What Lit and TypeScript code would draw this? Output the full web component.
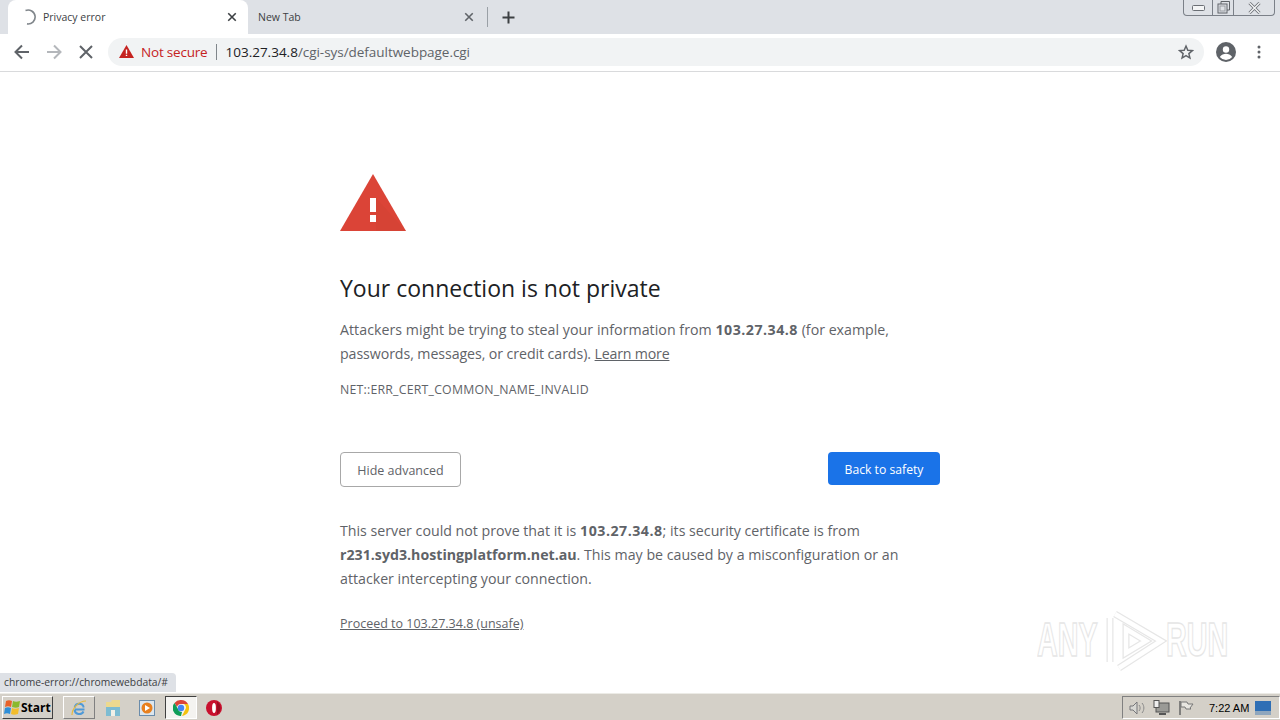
import { LitElement, css, html, svg } from 'lit';
import { customElement } from 'lit/decorators.js';

const cross = (size: number, color: string, sw: number) => html`<svg width=${size} height=${size} viewBox="0 0 12 12"><path d="M1.5 1.5 10.5 10.5M10.5 1.5 1.5 10.5" stroke=${color} stroke-width=${sw} fill="none"/></svg>`;

// watermark bands: a thick grey stroke with a white one on top gives the double line
const bands = ['M10 6 56 33 14 60', 'M5 10V54', 'M21 21 41 33 21 45Z'];

@customElement('app-root')
export class AppRoot extends LitElement {
  static styles = css`
    :host {
      display: flex;
      flex-direction: column;
      width: 1280px;
      height: 720px;
      overflow: hidden;
      position: relative;
      background: #fff;
      font-family: "Open Sans", "Noto Sans", sans-serif;
      color: #333;
    }
    svg { display: block; flex: none; }

    /* tab strip */
    .tabstrip {
      height: 34px;
      flex: none;
      background: #dee1e6;
      display: flex;
      padding-left: 8px;
    }
    .tab {
      display: flex;
      align-items: center;
      font-size: 10.5px;
      color: #3c4043;
      box-sizing: border-box;
    }
    .tab.active {
      width: 240px;
      background: #fff;
      border-radius: 8px 8px 0 0;
      padding: 0 11px 0 14px;
    }
    .tab.active .title { margin-left: 5px; }
    .tab.other { width: 237px; padding: 0 11px 0 10px; }
    .tab .title { flex: 1; }
    .sep { width: 1px; height: 20px; background: #9aa0a6; align-self: center; margin-left: 2px; }
    .plus { margin-left: 14px; align-self: center; }
    .winctl {
      margin-left: auto;
      margin-right: 5px;
      width: 92px;
      height: 16px;
      box-sizing: border-box;
      border: 1px solid #7b8088;
      border-top: none;
      border-radius: 0 0 4px 4px;
      display: grid;
      grid-template-columns: 28px 21px 1fr;
    }
    .winctl div { display: flex; align-items: center; justify-content: center; }
    .winctl div + div { border-left: 1px solid #7b8088; }

    /* toolbar */
    .toolbar {
      height: 38px;
      flex: none;
      box-sizing: border-box;
      border-bottom: 1px solid #d9dadc;
      display: flex;
      align-items: center;
      padding: 0 0 2px 13px;
    }
    .navbtn { width: 32px; display: flex; }
    .omnibox {
      width: 1096px;
      height: 28px;
      margin-left: -1px;
      border-radius: 14px;
      background: #f1f3f4;
      display: flex;
      align-items: center;
      box-sizing: border-box;
      padding: 0 10px 0 11px;
      font-size: 13.5px;
    }
    .notsecure { color: #c5221f; margin-left: 7px; letter-spacing: -0.2px; }
    .divider { width: 1px; height: 16px; background: #80868b; margin: 0 8px 0 9px; }
    .host { color: #202124; }
    .path { color: #5f6368; flex: 1; letter-spacing: -0.04px; }
    .avatar { margin-left: 12px; }
    .dots { margin-left: 21px; }

    /* interstitial */
    .page {
      flex: 1;
      padding: 102px 0 0 340px;
      width: 600px;
    }
    h1 {
      margin: 39px 0 0;
      font-size: 23px;
      font-weight: 400;
      line-height: 36px;
      color: #202124;
    }
    p {
      margin: 0;
      font-size: 14.2px;
      line-height: 24px;
      color: #5f6368;
    }
    .summary { margin-top: 12px; }
    b { font-weight: 700; }
    .ip { letter-spacing: 0.5px; }
    .lead { letter-spacing: 0.04px; }
    .tight { letter-spacing: -0.08px; }
    .u { text-decoration: underline; color: #5f6368; }
    .learn { letter-spacing: -0.2px; }
    .code {
      margin-top: 16px;
      font-size: 12.3px;
      letter-spacing: 0.22px;
      line-height: 16px;
      color: #5f6368;
    }
    .buttons {
      margin-top: 54px;
      display: flex;
      justify-content: space-between;
      align-items: flex-start;
    }
    .btn {
      box-sizing: border-box;
      border-radius: 4px;
      padding-top: 1px;
      display: flex;
      align-items: center;
      justify-content: center;
    }
    .btn.secondary { width: 121px; height: 35px; border: 1px solid #a8a8a8; color: #5f6368; font-size: 12.5px; }
    .btn.primary { width: 112px; height: 33px; background: #1a73e8; color: #fff; font-size: 12.2px; }
    .details { margin-top: 32px; }
    .proceed { margin-top: 23px; font-size: 12.5px; line-height: 20px; }

    /* status bubble over the page */
    .status {
      position: absolute;
      left: 0;
      bottom: 28px;
      height: 19px;
      padding: 0 8px 0 4px;
      background: #dee1e6;
      border-radius: 0 4px 0 0;
      font-size: 10.3px;
      line-height: 19px;
      color: #3c4043;
    }
    .watermark {
      position: absolute;
      left: 1037px;
      top: 608px;
      display: flex;
      align-items: center;
      font-family: "Liberation Sans", sans-serif;
      font-weight: 700;
      font-size: 48px;
      line-height: 64px;
      color: #fff;
      -webkit-text-stroke: 1.5px #e6e6e6;
    }
    .watermark span { display: block; transform: scaleX(0.6); transform-origin: left center; white-space: nowrap; }
    .watermark .any { width: 68px; }
    .watermark .run { width: 68px; margin-left: -1px; }

    /* taskbar */
    .taskbar {
      height: 28px;
      flex: none;
      box-sizing: border-box;
      background: #d4d0c8;
      border-top: 1px solid #fff;
      box-shadow: inset 0 1px 0 #ecebe6;
      display: flex;
      align-items: center;
      padding: 2px 0 0 2px;
    }
    .start {
      width: 51px;
      height: 23px;
      box-sizing: border-box;
      border: 1px solid;
      border-color: #fff #404040 #404040 #fff;
      display: flex;
      align-items: center;
      padding-left: 1px;
      font-weight: 700;
      font-size: 12px;
      color: #000;
    }
    .quick {
      display: flex;
      align-items: center;
      justify-content: center;
      box-sizing: border-box;
      height: 23px;
      width: 32px;
      margin-left: 2px;
    }
    .quick.raised { border: 1px solid; border-color: #fff #808080 #808080 #fff; margin-left: 10px; }
    .quick.pressed { border: 1px solid; border-color: #404040 #fff #fff #404040; background: #f4f3f0; }
    .quick.last { margin-left: 1px; }
    .tray {
      margin-left: auto;
      width: 158px;
      height: 23px;
      box-sizing: border-box;
      border: 1px solid;
      border-color: #808080 #fff #fff #808080;
      display: flex;
      align-items: center;
      padding-left: 5px;
      font-family: "Liberation Sans", sans-serif;
      font-size: 11px;
      color: #000;
    }
    .tray .net { margin-left: 7px; }
    .tray .flag { margin-left: 8px; }
    .clock { margin-left: 15px; width: 46px; }
  `;

  private arrow(color: string, flip = false) {
    return html`<svg width="18" height="18" viewBox="0 0 18 18" style=${flip ? 'transform:scaleX(-1)' : ''}><path d="M16 9H3M9 2.5 2.5 9 9 15.5" stroke=${color} stroke-width="2" fill="none"/></svg>`;
  }

  private renderTabs() {
    return html`
      <div class="tabstrip">
        <div class="tab active">
          <svg width="16" height="16" viewBox="0 0 16 16"><path d="M3.500 1.500A7 7 0 1 1 5 14.900" stroke="#80868b" stroke-width="1.600" fill="none"/></svg>
          <span class="title">Privacy error</span>
          ${cross(10, '#3c4043', 1.9)}
        </div>
        <div class="tab other">
          <span class="title">New Tab</span>
          ${cross(10, '#5f6368', 1.9)}
        </div>
        <div class="sep"></div>
        <svg class="plus" width="13" height="13" viewBox="0 0 13 13"><path d="M6.5 0.5v12M0.5 6.5h12" stroke="#3c4043" stroke-width="2"/></svg>
        <div class="winctl">
          <div><svg width="13" height="6" viewBox="0 0 13 6"><rect x="0.5" y="0.5" width="12" height="5" rx="1" fill="#f4f5f6" stroke="#6b6f75"/></svg></div>
          <div><svg width="13" height="13" viewBox="0 0 13 13"><path d="M4 3V.5h8.500V9H10" fill="none" stroke="#5f6368"/><rect x="1" y="3" width="9" height="9" fill="none" stroke="#5f6368"/><rect x="3" y="5" width="5" height="5" fill="none" stroke="#9a9da2"/></svg></div>
          <div><svg width="13" height="12" viewBox="0 0 13 12"><path d="M1.500 1 11.500 11M11.500 1 1.500 11" stroke="#6b6f75" stroke-width="3" fill="none"/><path d="M1.500 1 11.500 11M11.500 1 1.500 11" stroke="#f4f5f6" stroke-width="1.400" fill="none"/></svg></div>
        </div>
      </div>`;
  }

  private renderToolbar() {
    return html`
      <div class="toolbar">
        <div class="navbtn">${this.arrow('#5f6368')}</div>
        <div class="navbtn">${this.arrow('#b4b7bb', true)}</div>
        <div class="navbtn"><svg width="18" height="18" viewBox="0 0 18 18"><path d="M3 3 15 15M15 3 3 15" stroke="#5f6368" stroke-width="2"/></svg></div>
        <div class="omnibox">
          <svg width="15" height="13" viewBox="0 0 15 13"><path d="M7.500 0 15 13H0Z" fill="#c5221f"/><path d="M6.800 4.500h1.400v4.200H6.800zM6.800 9.700h1.400v1.400H6.800z" fill="#fff"/></svg>
          <span class="notsecure">Not secure</span>
          <span class="divider"></span>
          <span class="host">103.27.34.8</span><span class="path">/cgi-sys/defaultwebpage.cgi</span>
          <svg width="16" height="16" viewBox="0 0 24 24"><path d="M12 3l2.700 6.300 6.800.6-5.200 4.500 1.600 6.700L12 17.500l-5.900 3.600 1.600-6.700-5.200-4.500 6.800-.6z" fill="none" stroke="#5f6368" stroke-width="2.200"/></svg>
        </div>
        <svg class="avatar" width="20" height="20" viewBox="0 0 20 20"><circle cx="10" cy="10" r="10" fill="#5f6368"/><circle cx="10" cy="7.500" r="3.200" fill="#fff"/><path d="M3.800 15c1.500-2.500 4-3.300 6.200-3.300s4.700.8 6.200 3.300a8 8 0 0 1-12.400 0z" fill="#fff"/></svg>
        <svg class="dots" width="4" height="14" viewBox="0 0 4 14"><circle cx="2" cy="2" r="1.500" fill="#5f6368"/><circle cx="2" cy="7" r="1.500" fill="#5f6368"/><circle cx="2" cy="12" r="1.500" fill="#5f6368"/></svg>
      </div>`;
  }

  private renderPage() {
    return html`
      <div class="page">
        <svg width="66" height="57" viewBox="0 0 66 57">
          <path d="M33 0 66 57H0Z" fill="#db4437"/>
          <path d="M36 24 66 57H36Z" fill="#c9402f" opacity="0.25"/>
          <rect x="30" y="24" width="6" height="14" fill="#fff"/>
          <rect x="30" y="41" width="6" height="7" fill="#fff"/>
        </svg>
        <h1>Your connection is not private</h1>
        <p class="summary"><span class="lead">Attackers might be trying to steal your information from</span> <b class="ip">103.27.34.8</b> (for example, <span class="tight">passwords, messages, or credit cards).</span> <span class="u learn">Learn more</span></p>
        <div class="code">NET::ERR_CERT_COMMON_NAME_INVALID</div>
        <div class="buttons">
          <div class="btn secondary">Hide advanced</div>
          <div class="btn primary">Back to safety</div>
        </div>
        <p class="details">This server could not prove that it is <b class="ip">103.27.34.8</b>; its security certificate is from <b>r231.syd3.hostingplatform.net.au</b>. This may be caused by a misconfiguration or an attacker intercepting your connection.</p>
        <p class="proceed"><span class="u">Proceed to 103.27.34.8 (unsafe)</span></p>
      </div>`;
  }

  private renderTaskbar() {
    return html`
      <div class="taskbar">
        <div class="start">
          <svg width="17" height="17" viewBox="0 0 17 17">
            <path d="M2 2c2-1 4-1 6 0L7 8C5 7 3 7 1 8Z" fill="#e8622a"/>
            <path d="M9 2c2 1 4 1 7 0l-1 6c-2 1-4 1-7 0Z" fill="#8ab92d"/>
            <path d="M1 9c2-1 4-1 6 0l-1 6c-2-1-4-1-6 0Z" fill="#2f8fd8"/>
            <path d="M8 9c2 1 4 1 7 0l-1 6c-3 1-5 1-7 0Z" fill="#f3bd2c"/>
          </svg>
          Start
        </div>
        <div class="quick raised">
          <svg width="18" height="18" viewBox="0 0 18 18"><path d="M14.500 10.500H4.500M4.700 8.500a4.600 4.600 0 0 1 9 0M13.500 12.500a4.800 4.800 0 0 1-9-1.500" stroke="#4f9ad8" stroke-width="2" fill="none"/><path d="M2 16C2 9 9 2 16 2" stroke="#e8b93a" stroke-width="1.200" fill="none"/></svg>
        </div>
        <div class="quick">
          <svg width="16" height="18" viewBox="0 0 16 18"><path d="M1 3h5l1-2h8v14H1Z" fill="#ecd98f"/><rect x="1" y="8" width="14" height="9" fill="#7dbcd2"/><rect x="6" y="11" width="4" height="6" fill="#f0f0e8"/></svg>
        </div>
        <div class="quick">
          <svg width="16" height="16" viewBox="0 0 16 16"><rect x="0.500" y="0.500" width="15" height="15" fill="#dce6ee" stroke="#6a8cab"/><circle cx="8" cy="8" r="5.500" fill="#e8801e"/><path d="M6 5l5 3-5 3Z" fill="#fff"/></svg>
        </div>
        <div class="quick pressed">
          <svg width="16" height="16" viewBox="0 0 16 16"><path d="M8 0a8 8 0 0 1 7 4H8a4 4 0 0 0-4 3L1.500 3A8 8 0 0 1 8 0Z" fill="#db4437"/><path d="M15 4a8 8 0 0 1-6 12l3-6a4 4 0 0 0-1-6Z" fill="#f4c20d"/><path d="M1.500 3 5 9a4 4 0 0 0 4 3l-1 4A8 8 0 0 1 1.500 3Z" fill="#0f9d58"/><circle cx="8" cy="8" r="3.200" fill="#4285f4"/></svg>
        </div>
        <div class="quick last">
          <svg width="16" height="16" viewBox="0 0 16 16"><circle cx="8" cy="8" r="8" fill="#c8102e"/><path d="M11 1.500A8 8 0 0 1 11 14.500Z" fill="#9a0c22"/><ellipse cx="8" cy="8" rx="1.900" ry="5" fill="#fff"/></svg>
        </div>
        <div class="tray">
          <svg width="18" height="16" viewBox="0 0 18 16"><path d="M2 6h3l4-4v12l-4-4H2Z" fill="#d8d8d4" stroke="#77777a"/><path d="M11 5c1.500 2 1.500 4 0 6M14 3c2.500 3 2.500 7 0 10" stroke="#8a8a8a" fill="none"/></svg>
          <svg class="net" width="17" height="16" viewBox="0 0 17 16"><rect x="3" y="3" width="13" height="9" fill="#9a9a96" stroke="#555"/><rect x="1" y="0.500" width="5" height="7" fill="#eee" stroke="#555"/><path d="M6 14h7" stroke="#555" stroke-width="2"/></svg>
          <svg class="flag" width="16" height="16" viewBox="0 0 16 16"><path d="M2 1v14" stroke="#666" stroke-width="1.500"/><path d="M3 2h6l1 2h5l-3 4 1 1H8L7 7H3Z" fill="#e8e6e0" stroke="#777"/></svg>
          <span class="clock">7:22 AM</span>
          <svg width="16" height="14" viewBox="0 0 16 14"><rect width="16" height="14" fill="#2f6fb5"/><rect y="10" width="16" height="4" fill="#8fa6bd"/></svg>
        </div>
      </div>`;
  }

  render() {
    return html`
      ${this.renderTabs()}
      ${this.renderToolbar()}
      ${this.renderPage()}
      ${this.renderTaskbar()}
      <div class="status">chrome-error://chromewebdata/#</div>
      <div class="watermark">
        <span class="any">ANY</span>
        <svg width="62" height="64" viewBox="0 0 62 64" fill="none">
          ${bands.map((d) => svg`<path d=${d} stroke="#e6e6e6" stroke-width="7"/>`)}
          ${bands.map((d) => svg`<path d=${d} stroke="#fff" stroke-width="4.500"/>`)}
        </svg>
        <span class="run">RUN</span>
      </div>
    `;
  }
}
